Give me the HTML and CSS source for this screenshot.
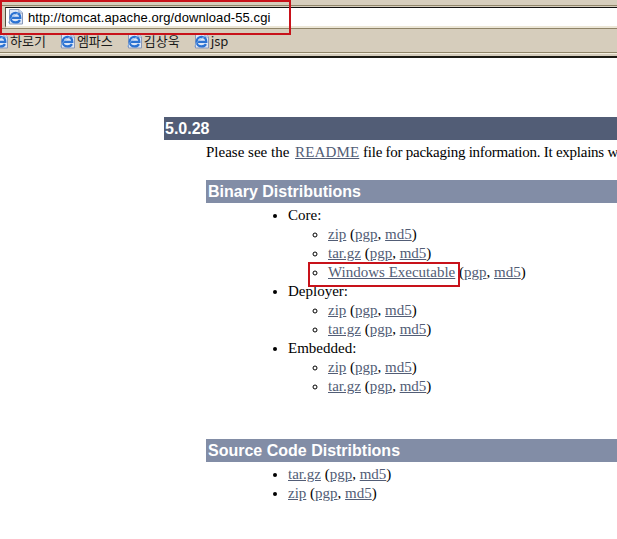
FILE: index.html
```html
<!DOCTYPE html>
<html lang="ko">

<head>
  <meta charset="UTF-8">
  <meta name="viewport" content="width=device-width, initial-scale=1.0">
  <title>Tomcat 5 Downloads</title>
  <link rel="stylesheet" href="styles.css">
</head>

<body>
  <svg class="defs" width="0" height="0">
    <symbol id="ie" viewBox="0 0 16 16">
      <path d="M1.500 .5h9.500l3.500 3.500v11h-13z" fill="#dce6f6" stroke="#8a98b8" />
      <path d="M11 .5v3.500h3.500" fill="#fff" stroke="#8a98b8" />
      <path d="M2.800 8.800h9.500c.2-3.200-2-5-4.700-5-2.900 0-5 2.100-5 4.900 0 2.800 2.100 4.700 5 4.700 2 0 3.500-.8 4.400-2.300" fill="none" stroke="#2b72d2" stroke-width="2.200" />
      <path d="M.5 14c1.500-4.800 6.500-9.500 13-11.500" fill="none" stroke="#86b4ea" stroke-width=".8" />
    </symbol>
  </svg>

  <!-- 브라우저 상단 -->
  <header class="browser">
    <div class="strip"></div>
    <div class="address">
      <svg class="icon"><use href="#ie"></use></svg>
      <span class="url">http://tomcat.apache.org/download-55.cgi</span>
    </div>
    <nav class="links">
      <a class="shortcut"><svg class="icon"><use href="#ie"></use></svg>하로기</a>
      <a class="shortcut"><svg class="icon"><use href="#ie"></use></svg>엠파스</a>
      <a class="shortcut"><svg class="icon"><use href="#ie"></use></svg>김상욱</a>
      <a class="shortcut"><svg class="icon"><use href="#ie"></use></svg>jsp</a>
    </nav>
    <div class="mark mark-url"></div>
  </header>

  <!-- 페이지 본문 -->
  <main class="page">
    <h3 class="version">5.0.28</h3>
    <div class="section">
      <p class="intro">Please see the <a href="#">README</a> <span class="tail">file for packaging information. It explains w</span></p>

      <h4 class="dist">Binary Distributions</h4>
      <ul class="outer">
        <li>Core:
          <ul>
            <li><a href="#">zip</a> (<a href="#">pgp</a>, <a href="#">md5</a>)</li>
            <li><a href="#">tar.gz</a> (<a href="#">pgp</a>, <a href="#">md5</a>)</li>
            <li class="marked"><a href="#">Windows Executable</a> (<a href="#">pgp</a>, <a href="#">md5</a>)
              <div class="mark mark-exe"></div>
            </li>
          </ul>
        </li>
        <li>Deployer:
          <ul>
            <li><a href="#">zip</a> (<a href="#">pgp</a>, <a href="#">md5</a>)</li>
            <li><a href="#">tar.gz</a> (<a href="#">pgp</a>, <a href="#">md5</a>)</li>
          </ul>
        </li>
        <li>Embedded:
          <ul>
            <li><a href="#">zip</a> (<a href="#">pgp</a>, <a href="#">md5</a>)</li>
            <li><a href="#">tar.gz</a> (<a href="#">pgp</a>, <a href="#">md5</a>)</li>
          </ul>
        </li>
      </ul>

      <h4 class="dist source">Source Code Distribtions</h4>
      <ul class="outer">
        <li><a href="#">tar.gz</a> (<a href="#">pgp</a>, <a href="#">md5</a>)</li>
        <li><a href="#">zip</a> (<a href="#">pgp</a>, <a href="#">md5</a>)</li>
      </ul>
    </div>
  </main>
</body>

</html>
```

FILE: styles.css
```css
/* 전체 */
html,
body {
  margin: 0;
  height: 539px;
  overflow: hidden;
  background: #fff;
}

.defs {
  display: block;
  height: 0;
}

/* 브라우저 상단 */
.browser {
  position: relative;
  height: 58px;
  box-sizing: border-box;
  background: #d6cdbc;
  border-bottom: 2px solid #1c1a14;
  overflow: hidden;
}

.strip {
  height: 5px;
  border-bottom: 1px solid #8f8468;
  margin-bottom: 1px;
}

.address {
  display: flex;
  align-items: center;
  gap: 4px;
  height: 18px;
  margin-left: 5px;
  padding-left: 2px;
  background: #fff;
  border-top: 1px solid #111;
  border-left: 1px solid #55503f;
  border-bottom: 2px solid #ece6d6;
}

.icon {
  width: 16px;
  height: 16px;
  flex: none;
}

.url {
  font: 13px "Liberation Sans", sans-serif;
  letter-spacing: 0.1px;
  color: #000;
}

.links {
  display: flex;
  gap: 14px;
  align-items: center;
  height: 23px;
  margin-left: -7px;
  border-top: 1px solid #8f8468;
  border-bottom: 1px solid #8f8468;
  box-shadow: 0 1px 0 #f3eee0;
}

.shortcut {
  display: flex;
  align-items: center;
  gap: 1px;
  font: 13px "Noto Sans CJK KR", "Liberation Sans", sans-serif;
  color: #1a1a1a;
}

/* 빨간 표시 상자 */
.mark {
  position: absolute;
  box-sizing: border-box;
  border: 2px solid #c8121a;
}

.mark-url {
  left: 0;
  top: 0;
  width: 291px;
  height: 35px;
}

.marked {
  position: relative;
}

.mark-exe {
  left: -20px;
  top: -1px;
  width: 152px;
  height: 25px;
}

/* 본문 */
.page {
  padding: 59px 0 0 164px;
  font: 15px/19px "Liberation Serif", serif;
  color: #000;
  white-space: nowrap;
}

.page a {
  color: #525d76;
}

.version {
  margin: 0;
  height: 23px;
  padding-left: 1px;
  background: #525d76;
  font: bold 16px/23px "Liberation Sans", sans-serif;
  color: #fff;
}

.section {
  padding: 3px 0 0 42px;
}

.intro {
  margin: 0;
}

.intro a {
  margin-left: 2px;
  letter-spacing: 0.15px;
}

.tail {
  letter-spacing: -0.25px;
}

.dist {
  margin: 18px 0 3px;
  height: 23px;
  padding-left: 2px;
  background: #828da6;
  font: bold 16px/23px "Liberation Sans", sans-serif;
  color: #fff;
}

.source {
  margin-top: 43px;
}

ul {
  margin: 0;
  padding: 0 0 0 40px;
  list-style: circle;
}

.outer {
  padding-left: 82px;
  list-style: disc;
}
```
